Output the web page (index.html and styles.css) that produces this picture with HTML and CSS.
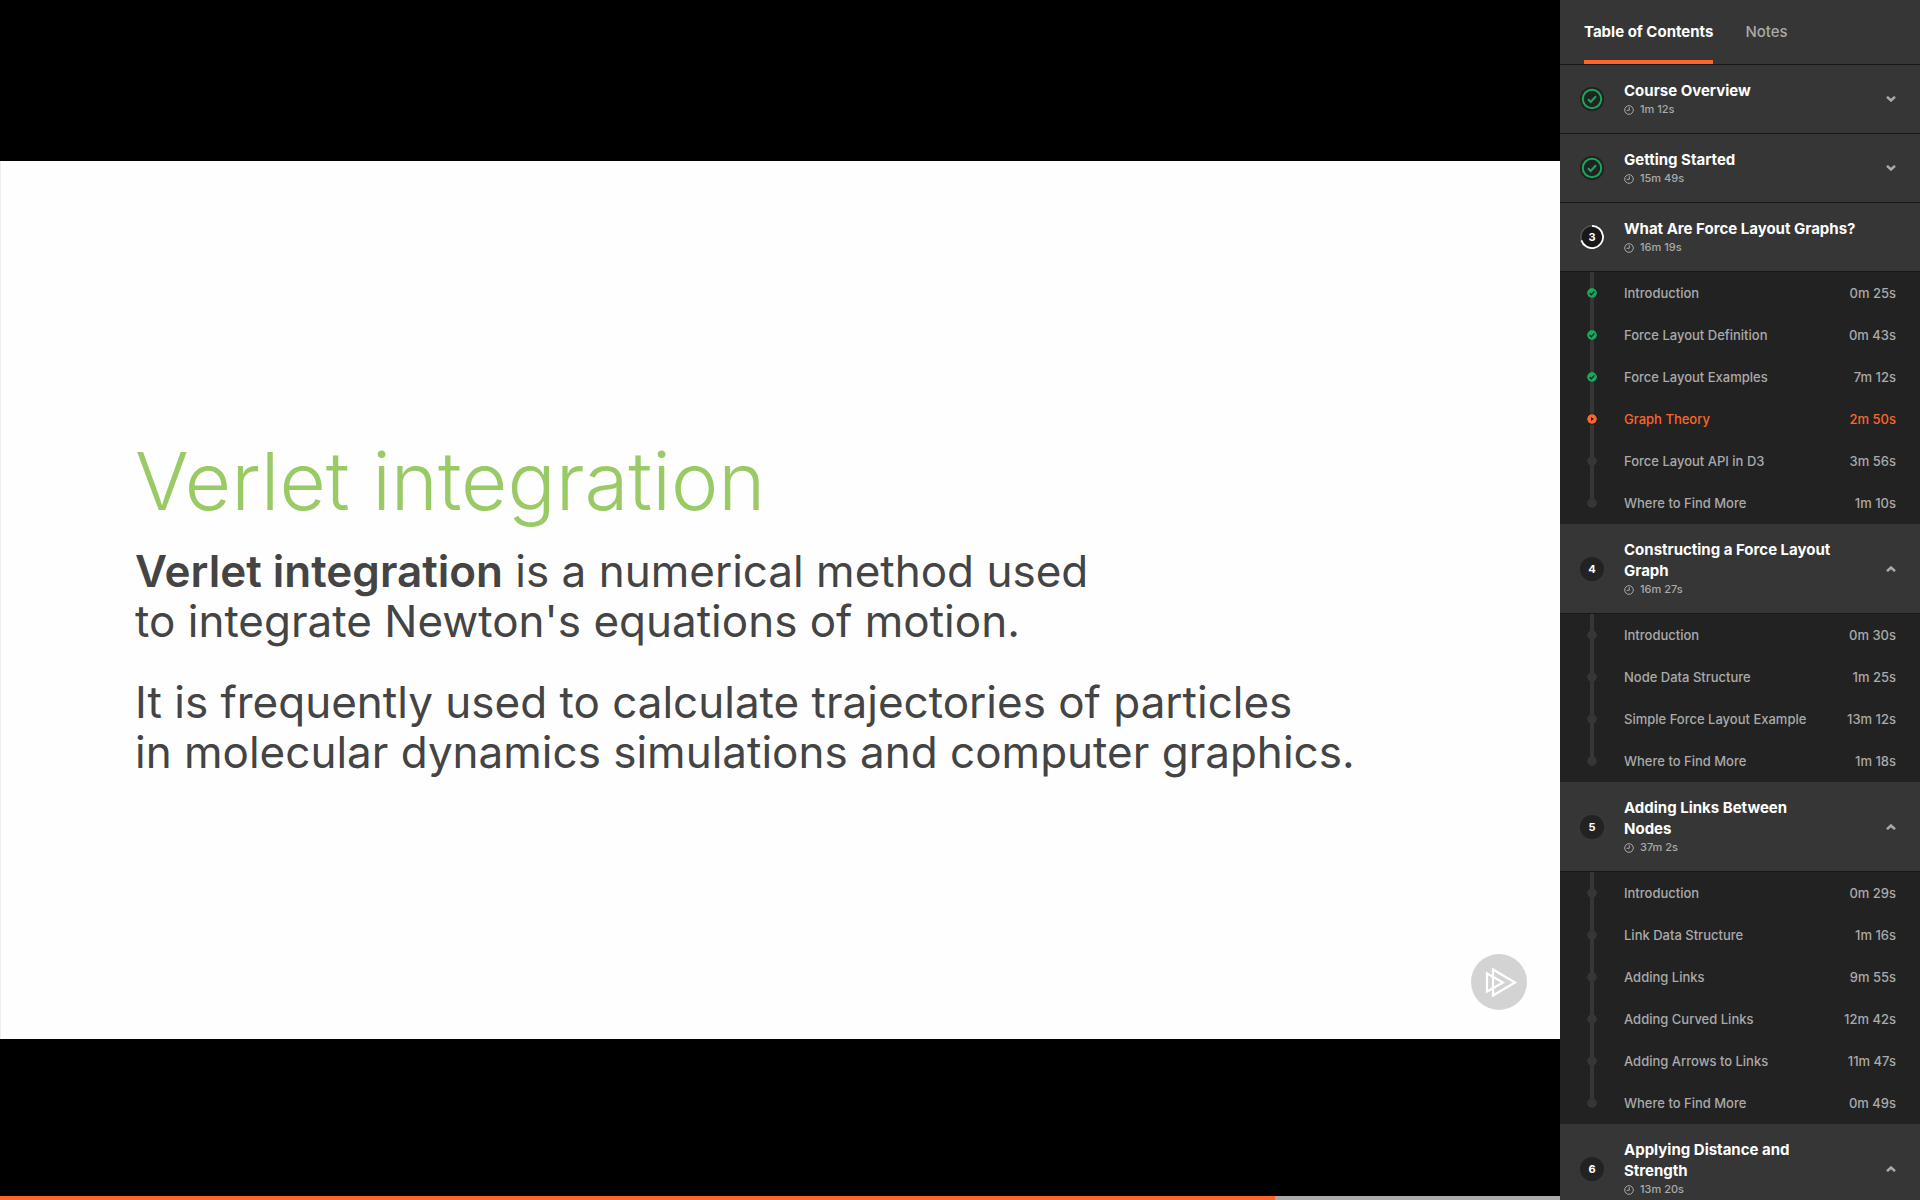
FILE: index.html
```html
<!DOCTYPE html>
<html lang="en">
<head>
<meta charset="utf-8">
<title>What Are Force Layout Graphs? - Graph Theory</title>
<link rel="stylesheet" href="styles.css">
</head>
<body>
<svg class="sprite" aria-hidden="true">
  <symbol id="clock" viewBox="0 0 10 10"><circle cx="5" cy="5" r="4.3" fill="none" stroke="currentColor"/><path d="M5.3 2.2V5.3H2.7" fill="none" stroke="currentColor"/></symbol>
  <symbol id="down" viewBox="0 0 10 6"><path d="M1 .8 5 4.5 9 .8" fill="none" stroke="currentColor" stroke-width="2.5"/></symbol>
  <symbol id="up" viewBox="0 0 10 6"><path d="M1 5.2 5 1.5 9 5.2" fill="none" stroke="currentColor" stroke-width="2.5"/></symbol>
  <symbol id="done" viewBox="0 0 24 24"><circle cx="12" cy="12" r="12" fill="#222"/><circle cx="12" cy="12" r="9.2" fill="none" stroke="#16a85c" stroke-width="2"/><path d="M8 12.2 10.7 15 16 9.3" fill="none" stroke="#16a85c" stroke-width="2.1"/></symbol>
  <symbol id="ring" viewBox="0 0 24 24"><circle cx="12" cy="12" r="11.2" fill="#181818" stroke="#555" stroke-width="1.5"/><path d="M12 .9A11.1 11.1 0 1 1 1.4 15.4" fill="none" stroke="#fff" stroke-width="1.8"/></symbol>
  <symbol id="tick" viewBox="0 0 10 10"><circle cx="5" cy="5" r="5" fill="#16a85c"/><path d="M2.6 5.2 4.3 6.8 7.5 3.4" fill="none" stroke="#222" stroke-width="1.3"/></symbol>
  <symbol id="play" viewBox="0 0 10 10"><circle cx="5" cy="5" r="5" fill="#ff6529"/><path d="M4 3 7 5 4 7Z" fill="#222"/></symbol>
  <symbol id="dot" viewBox="0 0 10 10"><circle cx="5" cy="5" r="5" fill="#363636"/></symbol>
</svg>
<div class="player">
  <main class="stage">
    <article class="slide">
      <h1>Verlet integration</h1>
      <p><strong>Verlet integration</strong> is a numerical method used<br>to integrate Newton's equations of motion.</p>
      <p>It is frequently used to calculate trajectories of particles<br>in molecular dynamics simulations and computer graphics.</p>
      <svg class="brand" viewBox="0 0 56 56" role="img" aria-label="Pluralsight"><circle cx="28" cy="28" r="28" fill="#d3d3d3"/><path d="M22 15.5 44 28.5 22 41.5ZM16 19.5 32 28.5 16 37.5Z" fill="none" stroke="#fff" stroke-width="2.2"/></svg>
    </article>
    <progress class="seek" max="1560" value="1275" aria-label="Playback position"></progress>
  </main>
  <aside class="sidebar">
    <nav class="tabs">
      <button class="tab active" type="button">Table of Contents</button>
      <button class="tab" type="button">Notes</button>
    </nav>
    <section>
      <button class="module" type="button">
        <span class="badge"><svg><use href="#done"/></svg></span>
        <span class="info"><span class="title">Course Overview</span><span class="time"><svg><use href="#clock"/></svg>1m 12s</span></span>
        <svg class="chevron"><use href="#down"/></svg>
      </button>
    </section>
    <section>
      <button class="module" type="button">
        <span class="badge"><svg><use href="#done"/></svg></span>
        <span class="info"><span class="title">Getting Started</span><span class="time"><svg><use href="#clock"/></svg>15m 49s</span></span>
        <svg class="chevron"><use href="#down"/></svg>
      </button>
    </section>
    <section>
      <button class="module current" type="button">
        <span class="badge"><svg><use href="#ring"/></svg><b>3</b></span>
        <span class="info"><span class="title">What Are Force Layout Graphs?</span><span class="time"><svg><use href="#clock"/></svg>16m 19s</span></span>
      </button>
      <ul class="lessons">
        <li><a href="#"><svg><use href="#tick"/></svg><span>Introduction</span><span>0m 25s</span></a></li>
        <li><a href="#"><svg><use href="#tick"/></svg><span>Force Layout Definition</span><span>0m 43s</span></a></li>
        <li><a href="#"><svg><use href="#tick"/></svg><span>Force Layout Examples</span><span>7m 12s</span></a></li>
        <li><a class="playing" href="#"><svg><use href="#play"/></svg><span>Graph Theory</span><span>2m 50s</span></a></li>
        <li><a href="#"><svg><use href="#dot"/></svg><span>Force Layout API in D3</span><span>3m 56s</span></a></li>
        <li><a href="#"><svg><use href="#dot"/></svg><span>Where to Find More</span><span>1m 10s</span></a></li>
      </ul>
    </section>
    <section>
      <button class="module" type="button">
        <span class="badge"><b>4</b></span>
        <span class="info"><span class="title">Constructing a Force Layout Graph</span><span class="time"><svg><use href="#clock"/></svg>16m 27s</span></span>
        <svg class="chevron"><use href="#up"/></svg>
      </button>
      <ul class="lessons">
        <li><a href="#"><svg><use href="#dot"/></svg><span>Introduction</span><span>0m 30s</span></a></li>
        <li><a href="#"><svg><use href="#dot"/></svg><span>Node Data Structure</span><span>1m 25s</span></a></li>
        <li><a href="#"><svg><use href="#dot"/></svg><span>Simple Force Layout Example</span><span>13m 12s</span></a></li>
        <li><a href="#"><svg><use href="#dot"/></svg><span>Where to Find More</span><span>1m 18s</span></a></li>
      </ul>
    </section>
    <section>
      <button class="module" type="button">
        <span class="badge"><b>5</b></span>
        <span class="info"><span class="title">Adding Links Between Nodes</span><span class="time"><svg><use href="#clock"/></svg>37m 2s</span></span>
        <svg class="chevron"><use href="#up"/></svg>
      </button>
      <ul class="lessons">
        <li><a href="#"><svg><use href="#dot"/></svg><span>Introduction</span><span>0m 29s</span></a></li>
        <li><a href="#"><svg><use href="#dot"/></svg><span>Link Data Structure</span><span>1m 16s</span></a></li>
        <li><a href="#"><svg><use href="#dot"/></svg><span>Adding Links</span><span>9m 55s</span></a></li>
        <li><a href="#"><svg><use href="#dot"/></svg><span>Adding Curved Links</span><span>12m 42s</span></a></li>
        <li><a href="#"><svg><use href="#dot"/></svg><span>Adding Arrows to Links</span><span>11m 47s</span></a></li>
        <li><a href="#"><svg><use href="#dot"/></svg><span>Where to Find More</span><span>0m 49s</span></a></li>
      </ul>
    </section>
    <section>
      <button class="module" type="button">
        <span class="badge"><b>6</b></span>
        <span class="info"><span class="title">Applying Distance and Strength</span><span class="time"><svg><use href="#clock"/></svg>13m 20s</span></span>
        <svg class="chevron"><use href="#up"/></svg>
      </button>
    </section>
  </aside>
</div>
</body>
</html>
```
FILE: styles.css
```css
* { box-sizing: border-box; }
body { margin: 0; background: #000; font-family: Inter, "Liberation Sans", sans-serif; }
button { font: inherit; border: 0; background: none; color: inherit; text-align: left; cursor: pointer; }
.sprite { display: none; }

.player { display: grid; grid-template-columns: 1fr 360px; height: 100vh; overflow: hidden; }

/* Video area */
.stage { display: grid; grid-template-rows: 1fr 4px; min-width: 0; }
.slide {
  grid-row: 1 / 3; grid-column: 1; align-self: center;
  position: relative; aspect-ratio: 16 / 9;
  padding: 276px 134px 0; background: #fefefe; border-left: 1px solid #eee;
  color: #444; font-size: 44px; line-height: 50px; white-space: nowrap;
}
.slide h1 { margin: 0 0 21px; font-size: 80px; line-height: 88px; font-weight: 300; color: #9aca66; }
.slide p { margin: 0 0 31px; }
.slide strong { font-weight: 600; }
.brand { position: absolute; right: 33px; bottom: 29px; width: 56px; height: 56px; }
.seek {
  grid-row: 2; grid-column: 1; appearance: none; display: block;
  width: 100%; height: 4px; border: 0; background: #aaa;
}
.seek::-webkit-progress-bar { background: #aaa; }
.seek::-webkit-progress-value { background: #ff6529; }

/* Sidebar */
.sidebar { background: #222; color: #fff; height: 100vh; overflow: hidden; }
.tabs { display: flex; gap: 32px; height: 65px; padding: 0 24px; background: #363636; border-bottom: 1px solid #181818; }
.tab { padding: 3px 0 0; border-bottom: 4px solid transparent; font-size: 15px; font-weight: 500; color: #aaa; }
.tab.active { border-color: #ff6529; color: #fff; font-weight: 700; }

.module {
  display: grid; grid-template-columns: 24px 1fr 10px; column-gap: 20px; align-items: center;
  width: 100%; padding: 15px 24px 15px 20px; background: #363636; border-bottom: 1px solid #181818;
}
.module.current { grid-template-columns: 24px 1fr; }
.badge { display: grid; place-items: center; width: 24px; height: 24px; border-radius: 50%; background: #222; }
.badge > * { grid-area: 1 / 1; }
.badge svg { width: 24px; height: 24px; }
.badge b { z-index: 1; font-size: 11px; line-height: 24px; }
.info { display: block; padding-right: 32px; }
.current .info { padding-right: 0; }
.title { display: block; font-size: 15px; line-height: 21px; font-weight: 700; }
.time { display: flex; align-items: center; gap: 6px; font-size: 11px; line-height: 17px; font-weight: 500; color: #aaa; }
.time svg { width: 10px; height: 10px; }
.chevron { width: 10px; height: 6px; color: #aaa; }

.lessons {
  margin: 0; padding: 0; list-style: none;
  background: linear-gradient(#363636, #363636) 30px 0 / 4px calc(100% - 21px) no-repeat;
}
.lessons a {
  display: grid; grid-template-columns: 10px 1fr auto; column-gap: 27px; align-items: center;
  height: 42px; padding: 0 24px 0 27px; font-size: 13px; font-weight: 500; color: #aaa; text-decoration: none;
}
.lessons span { padding-bottom: 1px; }
.lessons svg { width: 10px; height: 10px; border-radius: 50%; }
.lessons a.playing { color: #ff6529; }
.lessons .playing svg { outline: 1px solid #222; }
```
